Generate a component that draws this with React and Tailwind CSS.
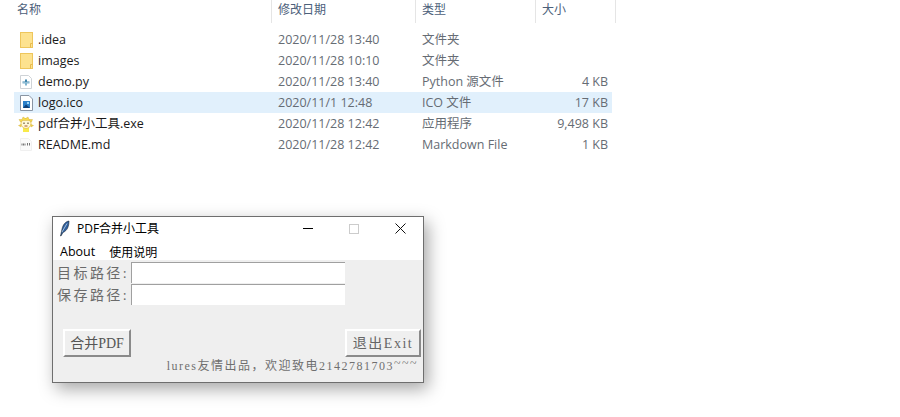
const files = [
  { name: '.idea', date: '2020/11/28 13:40', type: '文件夹', size: '', icon: 'folder' },
  { name: 'images', date: '2020/11/28 10:10', type: '文件夹', size: '', icon: 'folder' },
  { name: 'demo.py', date: '2020/11/28 13:40', type: 'Python 源文件', size: '4 KB', icon: 'py' },
  { name: 'logo.ico', date: '2020/11/1 12:48', type: 'ICO 文件', size: '17 KB', icon: 'ico', selected: true },
  { name: 'pdf合并小工具.exe', date: '2020/11/28 12:42', type: '应用程序', size: '9,498 KB', icon: 'exe' },
  { name: 'README.md', date: '2020/11/28 12:42', type: 'Markdown File', size: '1 KB', icon: 'md' },
]

function FileIcon({ kind }) {
  if (kind === 'folder') {
    return (
      <svg width="13" height="16" viewBox="0 0 13 16">
        <rect x="0.5" y="0.5" width="12" height="15" fill="#fde28f" stroke="#eec65c" />
        <path d="M10.500 15.500V11.500H12.500" fill="none" stroke="#e8bb4c" />
      </svg>
    )
  }
  if (kind === 'py') {
    return (
      <svg width="12" height="14" viewBox="0 0 12 14">
        <path d="M.5.5H8.500L11.500 3.500V13.500H.5Z" fill="#fff" stroke="#cfd3d7" />
        <path d="M5 4.500H7V6.500H9.500V7.500H2.500V6.500H5Z" fill="#3f86ad" />
        <path d="M2.500 7.500H9.500V8.500H7V10.500H5V8.500H2.500Z" fill="#7fb4cf" />
      </svg>
    )
  }
  if (kind === 'ico') {
    return (
      <svg width="13" height="16" viewBox="0 0 13 16">
        <path d="M.5.5H9L12.500 4V15.500H.5Z" fill="#fff" stroke="#8a95a3" />
        <rect x="3" y="6" width="7" height="7" fill="#2a7fc9" />
        <path d="M3 13 6 9.500 10 13Z" fill="#0e3f78" />
        <rect x="7" y="7" width="2" height="2" fill="#9fd6f5" />
      </svg>
    )
  }
  if (kind === 'exe') {
    return (
      <svg width="16" height="16" viewBox="0 0 16 16">
        <path d="M5 12H11V16H5Z" fill="#f8ea4a" />
        <circle cx="8" cy="7.500" r="5" fill="#fff8d8" stroke="#eccb55" />
        <path d="M2.500 6 1 3.500 4 3.500 5 1 7.500 2.500 10 1 11 3.500 14.500 3.500 13.500 6 11 4.500H5Z" fill="#f7da4c" stroke="#c9a63a" strokeWidth="0.4" />
        <path d="M3 8.500 .5 9.500 3 11ZM13 8.500 15.500 9.500 13 11Z" fill="#f7da4c" stroke="#c9a63a" strokeWidth="0.4" />
        <rect x="5.500" y="6.500" width="1" height="1.500" fill="#4b3a1c" />
        <rect x="9.500" y="6.500" width="1" height="1.500" fill="#4b3a1c" />
        <path d="M6.500 10H9.500" stroke="#a5562c" />
      </svg>
    )
  }
  return (
    <svg width="12" height="13" viewBox="0 0 12 13">
      <path d="M.5.5H8.500L11.500 3.500V12.500H.5Z" fill="#fbfbfb" stroke="#f0f0f0" />
      <path d="M2 7.500V5.500M3.500 7.500V5.500M5 7.500V5.500M7.500 5V7.500M9.500 5V7.500" stroke="#777" />
    </svg>
  )
}

function ColumnHeader({ label, className }) {
  return (
    <div className={`h-[23px] border-r border-[#e5e5e5] pl-[6px] pt-px text-[12px] text-[#4c607a] ${className}`}>
      {label}
    </div>
  )
}

function FileRow({ file }) {
  return (
    <div className={`flex h-[21px] w-[598px] items-center ${file.selected ? 'bg-[#e1f0fc]' : ''}`}>
      <div className="flex h-full w-[24px] shrink-0 items-center justify-center">
        <FileIcon kind={file.icon} />
      </div>
      <div className="w-[240px] shrink-0 pt-[2px] text-[#1a1a1a]">{file.name}</div>
      <div className="w-[144px] shrink-0 pt-[2px] text-[#666c74]">{file.date}</div>
      <div className="w-[112px] shrink-0 pt-[2px] text-[#666c74]">{file.type}</div>
      <div className="w-[74px] shrink-0 pt-[2px] text-right text-[#666c74]">{file.size}</div>
    </div>
  )
}

const serif = "font-['Liberation_Serif','Noto_Sans_CJK_SC',serif]"

function PathField({ label }) {
  return (
    <div className={`flex h-[22px] items-start text-[#6a6a6a] ${serif}`}>
      <span className="w-[78px] shrink-0 pr-[2px] pt-px text-right text-[14px] leading-[22px] tracking-[2.4px]">{label}</span>
      <div className="h-[21px] w-[214px] border-t-[1.5px] border-l border-[#a0a0a0] bg-white" />
    </div>
  )
}

function PdfWindow() {
  return (
    <div className="ml-[52px] mt-[61px] h-[167px] w-[372px] border border-[#6e6e6e] bg-[#efefef] shadow-[4px_6px_16px_rgba(0,0,0,0.35)]">
      <div className="flex h-[23px] items-center bg-white pl-[6px] text-[12px] text-black">
        <svg width="11" height="17" viewBox="0 0 11 17">
          <path d="M1.500 16 3 9C4 4.500 6.500 1.500 10 1 10 6 8.500 10.500 4 12.500L2 16Z" fill="#2f5f9e" stroke="#10161c" strokeWidth="0.5" />
          <path d="M3 12 8 3.500" stroke="#c3d6e4" strokeWidth="0.8" />
        </svg>
        <span className="ml-[7px]">PDF合并小工具</span>
        <div className="ml-auto flex h-full items-center">
          <div className="flex w-[46px] justify-center">
            <div className="h-px w-[10px] bg-black" />
          </div>
          <div className="flex w-[46px] justify-center">
            <div className="size-[10px] border border-[#cccccc]" />
          </div>
          <div className="flex w-[46px] justify-center">
            <svg width="11" height="11" viewBox="0 0 11 11">
              <path d="M.5.5 10.500 10.500M10.500.5.5 10.500" stroke="#111" strokeWidth="1" />
            </svg>
          </div>
        </div>
      </div>
      <div className="flex h-[20px] items-center gap-[14px] bg-white pl-[7px] pt-[5px] text-[12px] text-black">
        <span className="text-[12.5px]">About</span>
        <span>使用说明</span>
      </div>
      <div className="pt-[2px]">
        <PathField label="目标路径:" />
        <PathField label="保存路径:" />
      </div>
      <div className="mt-[23px] flex items-start justify-between pl-[10px] pr-[2px]">
        <button className={`h-[28px] w-[68px] border-2 border-t-white border-l-white border-r-[#8a8a8a] border-b-[#8a8a8a] text-[14px] text-[#555] ${serif}`}>
          合并PDF
        </button>
        <button className={`h-[28px] w-[76px] border-2 border-t-white border-l-white border-r-[#8a8a8a] border-b-[#8a8a8a] text-[14px] tracking-[1.5px] text-[#666] ${serif}`}>
          退出Exit
        </button>
      </div>
      <div className={`pr-[5px] text-right text-[12px] leading-[18px] tracking-[1.5px] text-[#6f6f6f] ${serif}`}>
        lures友情出品，欢迎致电2142781703<span className="inline-block -translate-y-[3px]">~~~</span>
      </div>
    </div>
  )
}

export default function App() {
  return (
    <div className="h-[417px] w-[900px] overflow-hidden bg-white font-['Open_Sans','Noto_Sans_CJK_SC',sans-serif] text-[12.5px]">
      <div className="flex">
        <ColumnHeader label="名称" className="w-[272px] pl-[17px]" />
        <ColumnHeader label="修改日期" className="w-[144px]" />
        <ColumnHeader label="类型" className="w-[120px]" />
        <ColumnHeader label="大小" className="w-[80px]" />
      </div>
      <div className="ml-[14px] mt-[6px]">
        {files.map((file) => (
          <FileRow key={file.name} file={file} />
        ))}
      </div>
      <PdfWindow />
    </div>
  )
}
